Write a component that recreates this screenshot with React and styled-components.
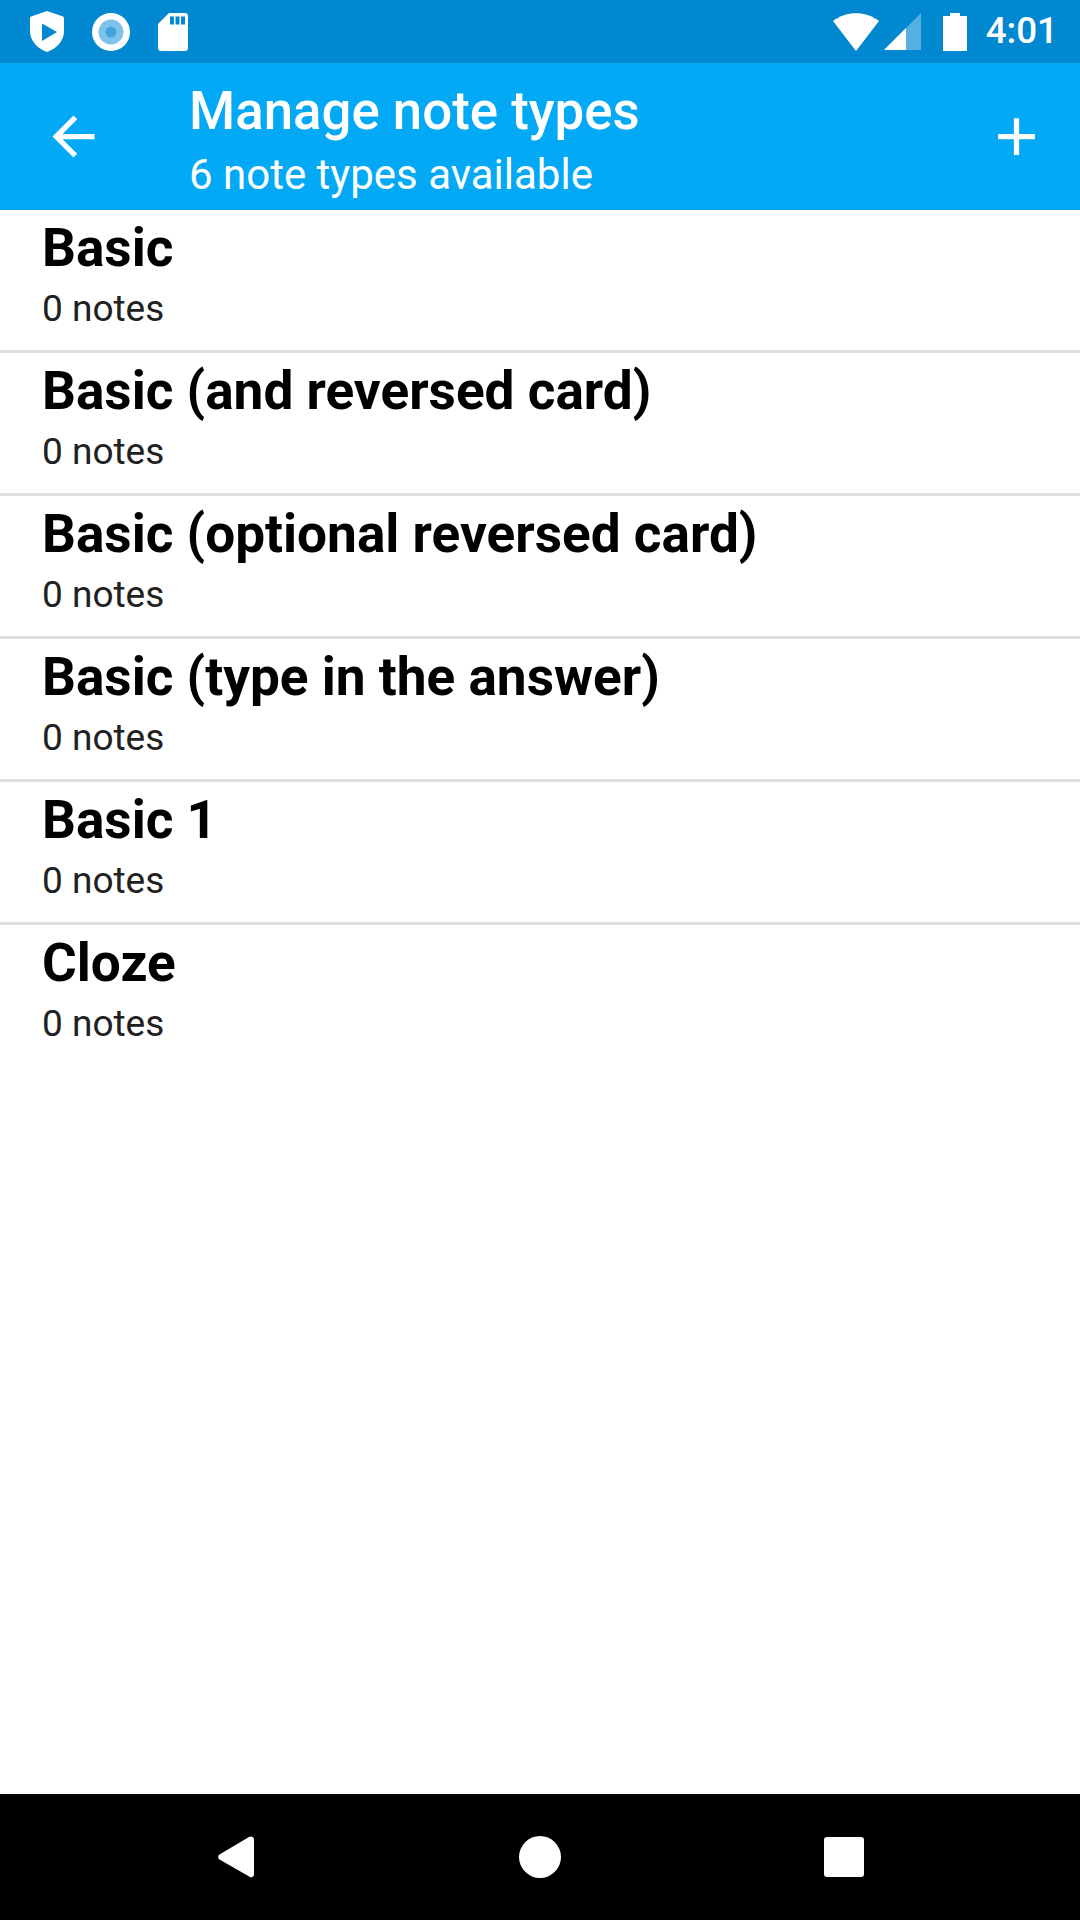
import React from 'react';
import styled, { createGlobalStyle } from 'styled-components';

const GlobalStyle = createGlobalStyle`
  html, body {
    margin: 0;
    padding: 0;
    background: #fff;
  }
  body {
    font-family: Roboto, "Noto Sans", sans-serif;
  }
`;

const Screen = styled.div`
  width: 1080px;
  height: 1920px;
  display: flex;
  flex-direction: column;
  background: #fff;
  overflow: hidden;
`;

const StatusBar = styled.div`
  height: 63px;
  flex: none;
  display: flex;
  align-items: center;
  justify-content: space-between;
  background: #0288d1;
  padding: 0 22px 0 30px;
  box-sizing: border-box;
`;

const StatusGroup = styled.div`
  display: flex;
  align-items: center;
  gap: ${(p) => p.$gap}px;
`;

const Battery = styled.svg`
  margin-left: 17px;
`;

const Clock = styled.span`
  font-size: 36.75px;
  font-weight: 500;
  color: #fff;
  line-height: 1;
  margin-left: 14px;
`;

const Toolbar = styled.div`
  height: 147px;
  flex: none;
  display: flex;
  align-items: center;
  background: #03a9f4;
  padding: 0 32px 0 42px;
  box-sizing: border-box;
  color: #fff;
`;

const Titles = styled.div`
  flex: 1;
  margin-left: 84px;
  padding-top: 6px;
  display: flex;
  flex-direction: column;
  gap: 8px;
`;

const Title = styled.div`
  font-size: 52.8px;
  font-weight: 500;
  line-height: 62px;
`;

const Subtitle = styled.div`
  font-size: 42px;
  font-weight: 400;
  line-height: 50px;
`;

const List = styled.div`
  flex: 1;
`;

const Row = styled.div`
  height: 143px;
  box-sizing: border-box;
  padding: 0 42px;
  border-bottom: ${(p) => (p.$last ? 'none' : '3px solid #e0e0e0')};
`;

const RowTitle = styled.div`
  font-size: 53.15px;
  font-weight: 700;
  color: #000;
  line-height: 76px;
`;

const RowSub = styled.div`
  font-size: 37px;
  color: #212121;
  line-height: 46px;
`;

const NavBar = styled.div`
  height: 126px;
  flex: none;
  position: relative;
  background: #000;
`;

const NavIcon = styled.svg`
  position: absolute;
  top: 42px;
  left: ${(p) => p.$left}px;
`;

const rows = [
  'Basic',
  'Basic (and reversed card)',
  'Basic (optional reversed card)',
  'Basic (type in the answer)',
  'Basic 1',
  'Cloze',
];

export default function App() {
  return (
    <Screen>
      <GlobalStyle />
      <StatusBar>
        <StatusGroup $gap={28}>
          <svg width="34" height="41" viewBox="0 0 34 41">
            <path
              d="M17 0 L33 5.5 Q34 6 34 7 V20 C34 30 26.5 37.5 17 41 C7.5 37.5 0 30 0 20 V7 Q0 6 1 5.5 Z"
              fill="#fff"
            />
            <path d="M12 12.5 L27 21 L12 30 Z" fill="#0288d1" />
          </svg>
          <svg width="38" height="38" viewBox="0 0 38 38">
            <circle cx="19" cy="19" r="19" fill="#fff" />
            <circle cx="19" cy="19" r="12.5" fill="#7fc3ea" />
            <circle cx="19" cy="19" r="5.5" fill="#42a5de" />
          </svg>
          <svg width="30" height="38" viewBox="0 0 30 38">
            <path
              d="M11 0 H27 A3 3 0 0 1 30 3 V35 A3 3 0 0 1 27 38 H3 A3 3 0 0 1 0 35 V11 Z"
              fill="#fff"
            />
            <rect x="12" y="3.5" width="4" height="8" fill="#0288d1" />
            <rect x="17.5" y="3.5" width="4" height="8" fill="#0288d1" />
            <rect x="23" y="3.5" width="4" height="8" fill="#0288d1" />
          </svg>
        </StatusGroup>
        <StatusGroup $gap={5}>
          <svg width="46" height="38" viewBox="0 0 46 38">
            <path d="M0 8 C13 -2.5 33 -2.5 46 8 L23 38 Z" fill="#fff" />
          </svg>
          <svg width="37" height="37" viewBox="0 0 37 37">
            <path d="M37 0 V37 H0 Z" fill="#fff" fillOpacity="0.33" />
            <path d="M22 15 V37 H0 Z" fill="#fff" />
          </svg>
          <Battery width="24" height="38" viewBox="0 0 24 38">
            <path d="M7 0 H17 V3 H24 V38 H0 V3 H7 Z" fill="#fff" />
          </Battery>
          <Clock>4:01</Clock>
        </StatusGroup>
      </StatusBar>
      <Toolbar>
        <svg width="63" height="63" viewBox="0 0 24 24" fill="#fff">
          <path d="M20 11H7.83l5.59-5.59L12 4l-8 8 8 8 1.41-1.41L7.83 13H20v-2z" />
        </svg>
        <Titles>
          <Title>Manage note types</Title>
          <Subtitle>6 note types available</Subtitle>
        </Titles>
        <svg width="63" height="63" viewBox="0 0 24 24" fill="#fff">
          <path d="M19 13h-6v6h-2v-6H5v-2h6V5h2v6h6v2z" />
        </svg>
      </Toolbar>
      <List>
        {rows.map((name, i) => (
          <Row key={name} $last={i === rows.length - 1}>
            <RowTitle>{name}</RowTitle>
            <RowSub>0 notes</RowSub>
          </Row>
        ))}
      </List>
      <NavBar>
        <NavIcon $left={218} width="36" height="42" viewBox="0 0 36 42">
          <path
            d="M33 0.5 A3 3 0 0 1 36 3 V39 A3 3 0 0 1 32 41 L1.5 23.5 A3 3 0 0 1 1.5 18.5 L31 1 Z"
            fill="#fff"
          />
        </NavIcon>
        <NavIcon $left={519} width="42" height="42" viewBox="0 0 42 42">
          <circle cx="21" cy="21" r="21" fill="#fff" />
        </NavIcon>
        <NavIcon $left={824} width="40" height="42" viewBox="0 0 40 42">
          <rect x="0" y="1" width="40" height="40" rx="3" fill="#fff" />
        </NavIcon>
      </NavBar>
    </Screen>
  );
}
